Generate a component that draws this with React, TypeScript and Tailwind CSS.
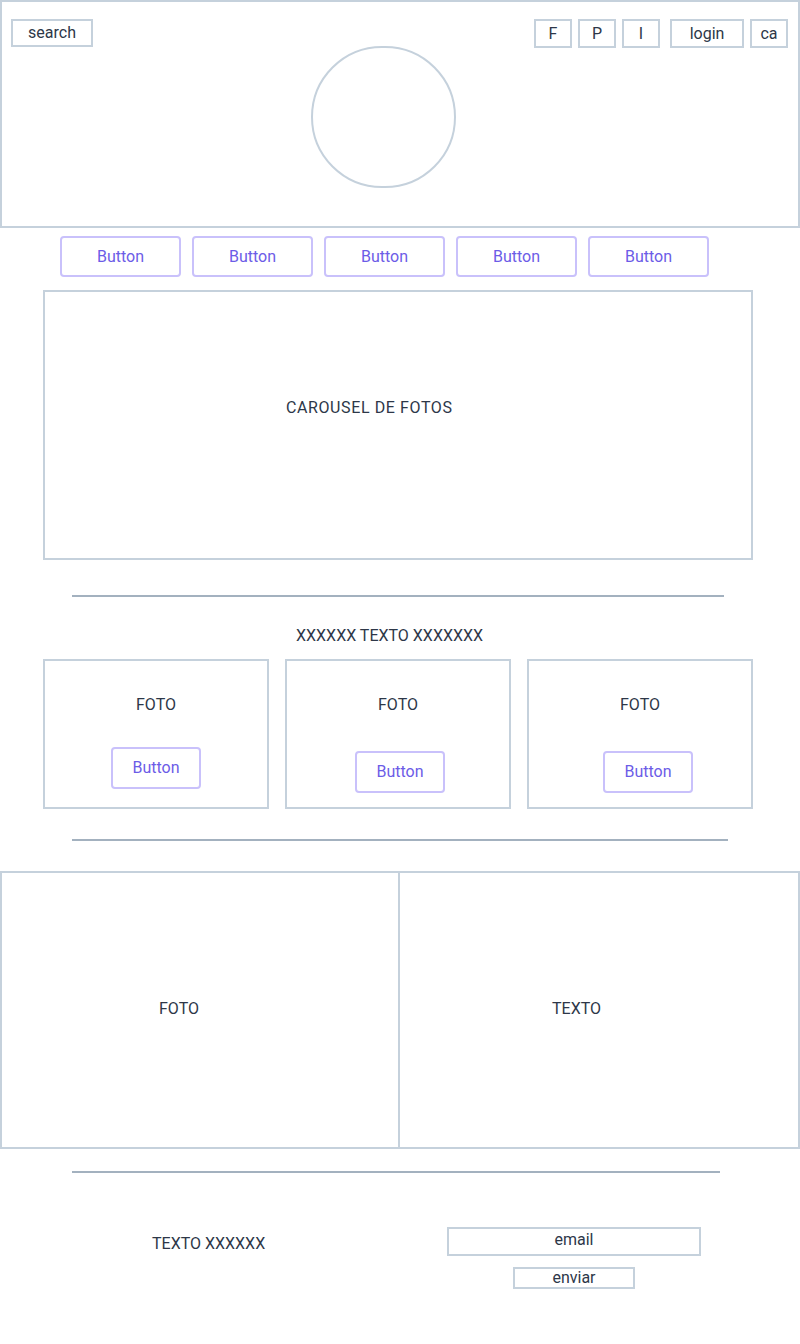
import React from "react";

const box = "border-2 border-[#c5d1dc]";
const purpleBtn =
  "flex items-center justify-center rounded border-2 border-[#c9c1fb] text-[#6c5ce7] text-base";

function Divider({ width }: { width: string }) {
  return <div className={`ml-[72px] h-[2px] bg-[#a3b1bf] ${width}`} />;
}

function Card({ btnClass }: { btnClass: string }) {
  return (
    <div className={`${box} w-[226px] h-[150px] flex flex-col pt-[32px]`}>
      <p className="text-center leading-6">FOTO</p>
      <button className={`${purpleBtn} w-[90px] h-[42px] ${btnClass}`}>Button</button>
    </div>
  );
}

export default function App() {
  return (
    <div
      className="w-[800px] min-h-[1344px] bg-white text-[#2d3748] text-base"
      style={{ fontFamily: "Roboto, 'Noto Sans', sans-serif" }}
    >
      {/* Header */}
      <header className={`${box} h-[228px] pt-[17px]`}>
        <div className="flex items-start justify-between pl-[9px] pr-[10px]">
          <div className={`${box} w-[82px] h-[28px] flex items-center justify-center leading-none`}>
            search
          </div>
          <div className="flex items-center">
            <div className={`${box} w-[38px] h-[29px] flex items-center justify-center`}>F</div>
            <div className={`${box} w-[38px] h-[29px] flex items-center justify-center ml-[6px]`}>P</div>
            <div className={`${box} w-[38px] h-[29px] flex items-center justify-center ml-[6px]`}>I</div>
            <div className={`${box} w-[74px] h-[29px] flex items-center justify-center ml-[10px]`}>login</div>
            <div className={`${box} w-[38px] h-[29px] flex items-center justify-center ml-[6px]`}>ca</div>
          </div>
        </div>
        <div className={`${box} rounded-full w-[145px] h-[142px] ml-[309px] -mt-[2px]`} />
      </header>

      {/* Nav buttons */}
      <nav className="flex gap-[11px] pl-[60px] mt-[8px]">
        {[0, 1, 2, 3, 4].map((i) => (
          <button key={i} className={`${purpleBtn} w-[121px] h-[41px]`}>
            Button
          </button>
        ))}
      </nav>

      {/* Carousel */}
      <section className={`${box} ml-[43px] mt-[13px] w-[710px] h-[270px] pt-[104px] pl-[241px]`}>
        <p className="leading-6 tracking-[0.6px]">CAROUSEL DE FOTOS</p>
      </section>

      <div className="mt-[35px]">
        <Divider width="w-[652px]" />
      </div>

      <p className="mt-[27px] ml-[296px] leading-6">XXXXXX TEXTO XXXXXXX</p>

      {/* Cards */}
      <div className="flex gap-4 ml-[43px] mt-[11px]">
        <Card btnClass="mt-[30px] ml-[66px]" />
        <Card btnClass="mt-[34px] ml-[68px]" />
        <Card btnClass="mt-[34px] ml-[74px]" />
      </div>

      <div className="mt-[30px]">
        <Divider width="w-[656px]" />
      </div>

      {/* Two columns */}
      <section className={`${box} mt-[30px] h-[278px] flex`}>
        <div className="w-[398px] border-r-2 border-[#c5d1dc] flex items-center pl-[157px] pb-[2px]">
          <p className="leading-6">FOTO</p>
        </div>
        <div className="flex-1 flex items-center pl-[152px] pb-[2px]">
          <p className="leading-6">TEXTO</p>
        </div>
      </section>

      <div className="mt-[22px]">
        <Divider width="w-[648px]" />
      </div>

      {/* Footer */}
      <footer className="flex mt-[54px]">
        <div className="w-[447px] pl-[152px] pt-[5px]">
          <p className="leading-6">TEXTO XXXXXX</p>
        </div>
        <div className="w-[254px] flex flex-col items-center">
          <div className={`${box} w-[254px] h-[29px] flex items-center justify-center leading-none pb-[3px]`}>
            email
          </div>
          <button className={`${box} w-[122px] h-[22px] mt-[11px] flex items-center justify-center leading-none`}>
            enviar
          </button>
        </div>
      </footer>
    </div>
  );
}
